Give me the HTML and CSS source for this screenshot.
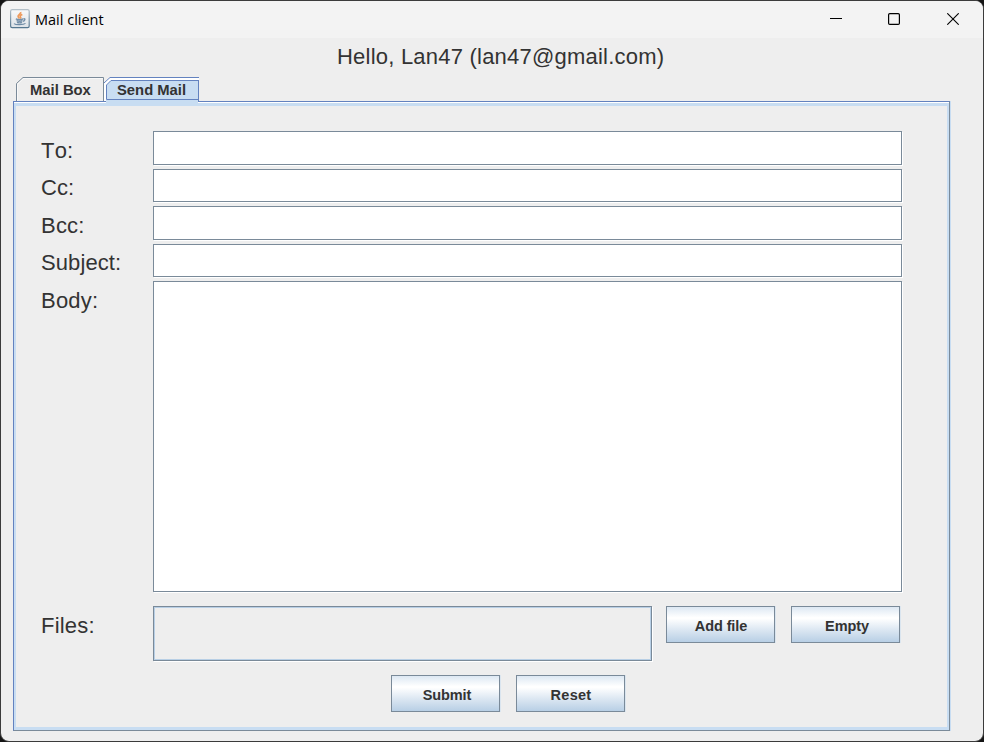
FILE: index.html
```html
<!DOCTYPE html>
<html lang="en">
<head>
<meta charset="utf-8">
<title>Mail client</title>
<link rel="stylesheet" href="styles.css">
</head>
<body>
<div class="window">
  <header class="titlebar">
    <svg class="app-icon" width="20" height="20" viewBox="0 0 20 20">
      <defs>
        <linearGradient id="edge" x1="0" y1="0" x2="0" y2="1"><stop offset="0" stop-color="#b4c0c8"/><stop offset="1" stop-color="#557790"/></linearGradient>
        <linearGradient id="face" x1="0" y1="0" x2="0" y2="1"><stop offset="0" stop-color="#f8f9fa"/><stop offset="1" stop-color="#dce2e7"/></linearGradient>
      </defs>
      <rect x=".6" y=".6" width="18.6" height="18" rx="1.6" fill="url(#face)" stroke="url(#edge)" stroke-width="1.2"/>
      <path d="M10.7 3C11.2 5 7.6 5.6 8.1 7.6c.2.8.9 1.2 1.4 2M12.3 5.4c-2.5 1.1-2.5 1.9-1.7 2.8.4.6.2 1-.3 1.4" fill="none" stroke="#ee9a5c" stroke-width="1.7"/>
      <path d="M5.8 9.8c2 .8 5.800.8 7.400 0M6.500 11.700c1.600.6 4.700.6 6 0M7 13.300c1.500.6 3.700.6 5 0M13.500 9.700c2-.3 1.800 2-.6 2.600" fill="none" stroke="#7590a9" stroke-width="1.400"/>
      <path d="M4 14.600c1.500 1.400 9.500 1.400 11.500-.2" fill="none" stroke="#6e8ba5" stroke-width="1.200"/>
    </svg>
    <h1 class="title">Mail client</h1>
    <div class="controls">
      <svg width="12" height="12" viewBox="0 0 12 12"><path d="M0 5.500h12" stroke="#000"/></svg>
      <svg width="12" height="12" viewBox="0 0 12 12"><rect x=".6" y=".6" width="10.800" height="10.800" rx="1.200" fill="none" stroke="#000" stroke-width="1.200"/></svg>
      <svg width="12" height="12" viewBox="0 0 12 12"><path d="M.3.3l11.400 11.400M11.700.3L.3 11.700" stroke="#000" stroke-width="1.100"/></svg>
    </div>
  </header>
  <p class="greeting"><span>Hello, Lan47 (lan47@gmail.com)</span></p>
  <nav class="tabs">
    <a class="tab tab-mailbox">
      <svg width="88" height="24" viewBox="0 0 88 24"><path d="M.5 24V6.500L7 .5h80.500V24" fill="#eee" stroke="#7a8a99"/><path d="M1.500 24V7.500L7.500 1.500H87" fill="none" stroke="#f8f8f8"/></svg>
      <span>Mail Box</span>
    </a>
    <a class="tab tab-send">
      <svg width="95" height="26" viewBox="0 0 95 26"><path d="M0 6L6 0h89v24H0z" fill="#fff"/><path d="M0 6L6 .5h89" fill="none" stroke="#6382bf"/><path d="M2.500 22.500V8L7 3.500h87.500V22.500z" fill="#c8ddf2" stroke="#6382bf"/><path d="M94.500 3v22" stroke="#6382bf"/><path d="M2 23h92v3H2z" fill="#c8ddf2"/></svg>
      <span>Send Mail</span>
    </a>
  </nav>
  <main class="panel">
    <form class="form">
      <label>To:</label><div class="field"></div>
      <label class="short">Cc:</label><div class="field"></div>
      <label>Bcc:</label><div class="field"></div>
      <label class="short">Subject:</label><div class="field"></div>
      <label>Body:</label><div class="field"></div>
    </form>
    <div class="files-row">
      <label>Files:</label>
      <div class="files"></div>
      <button type="button" class="add">Add file</button>
      <button type="button">Empty</button>
    </div>
    <div class="actions">
      <button type="button">Submit</button>
      <button type="button" class="reset">Reset</button>
    </div>
  </main>
</div>
</body>
</html>
```
FILE: styles.css
```css
* { box-sizing: border-box; }

body {
  margin: 0;
  background: #151515;
  font-family: "Liberation Sans", Arial, sans-serif;
  color: #333;
}

.window {
  display: flex;
  flex-direction: column;
  width: 984px;
  height: 742px;
  border: 1px solid #3b3b3b;
  border-radius: 9px;
  background: #eee;
  overflow: hidden;
}

.titlebar {
  display: flex;
  align-items: flex-start;
  flex: 0 0 37px;
  padding: 8px 24px 0 9px;
  background: #f3f3f3;
}

.app-icon { flex: none; }

.title {
  margin: 0 0 0 5px;
  font: 400 14.5px/21px "Open Sans", "Noto Sans", sans-serif;
  color: #000;
}

.controls {
  display: flex;
  gap: 47px;
  margin: 4px 0 0 auto;
}

.controls svg:first-child {
  margin: 0 -1px 0 1px;
}

.greeting {
  flex: 0 0 39px;
  margin: 0;
  padding: 6px 0 0 336px;
  font-size: 22px;
  line-height: 26px;
  letter-spacing: 0.22px;
  white-space: nowrap;
}

.tabs {
  display: flex;
  flex: 0 0 24px;
  height: 24px;
  min-height: 0;
  padding-left: 15px;
}

.tab {
  display: grid;
  align-items: start;
  height: 24px;
  font-size: 14.8px;
  font-weight: 700;
  line-height: 27px;
  white-space: nowrap;
}

.tab > * { grid-area: 1 / 1; }
.tab-mailbox > span { padding-left: 14px; }
.tab-send > span { padding-left: 13px; }
.tab-send { z-index: 1; }

.panel {
  flex: none;
  width: 937px;
  height: 630px;
  margin-left: 12px;
  padding: 29px 0 0 25px;
  border: 1px solid #6382bf;
  border-right-color: #7a8a99;
  border-bottom-color: #7a8a99;
  box-shadow: inset 0 1px #fff, inset 2px 0 #c8ddf2, inset -2px 0 #c8ddf2, inset 0 4px #c8ddf2, inset 0 -3px #c8ddf2, 1px 0 #c8ddf2;
}

.form {
  display: grid;
  grid-template-columns: 114px 749px;
  grid-template-rows: 34px 33px 34px 33px 311px;
  row-gap: 4px;
}

label {
  padding-left: 2px;
  font-size: 22px;
  line-height: 39px;
  letter-spacing: 0.22px;
  font-kerning: none;
}

.short {
  line-height: 37px;
  letter-spacing: 0.1px;
}

.field, .files {
  border: 1px solid #7a8a99;
  box-shadow: 1px 1px #fff;
}

.field { background: #fff; }

.files-row {
  display: flex;
  align-items: flex-start;
  margin-top: 14px;
}

.files-row label { width: 114px; }

.files {
  width: 499px;
  height: 55px;
  margin-right: 14px;
  box-shadow: 1px 1px #fff, inset 1px 1px #b8cfe5, inset -1px -1px #b8cfe5;
}

button {
  width: 109px;
  height: 37px;
  padding: 2px 0 0 3px;
  border: 1px solid #7a8a99;
  border-radius: 0;
  background: linear-gradient(#dde8f3 0%, #fff 30%, #fff 33%, #dce7f2 65%, #b8cfe5 100%);
  box-shadow: 1px 0 #dae5ef;
  color: #333;
  font: 700 14.5px/20px "Liberation Sans", Arial, sans-serif;
  letter-spacing: -0.1px;
}

button + button { margin-left: 16px; }

.add { padding-left: 1px; }

.reset {
  padding-left: 1px;
  letter-spacing: 0.3px;
}

.actions {
  display: flex;
  margin: 14px 0 0 352px;
}
```
